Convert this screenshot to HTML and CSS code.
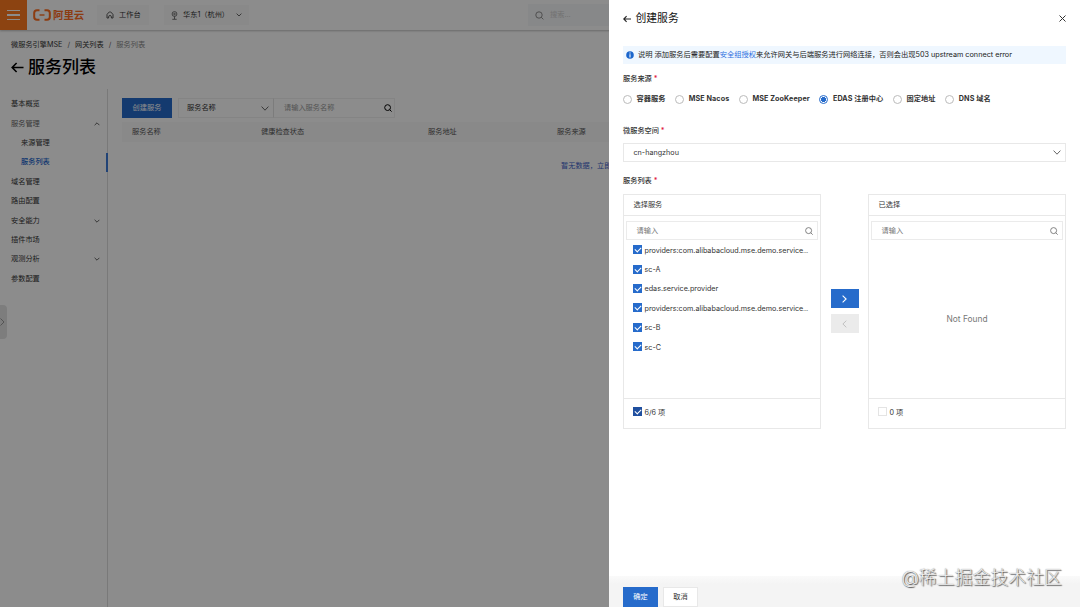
FILE: index.html
```html
<!DOCTYPE html>
<html lang="zh-CN">
<head>
    <meta charset="UTF-8">
    <meta name="viewport" content="width=device-width, initial-scale=1.0">
    <title>服务列表</title>
    <link rel="stylesheet" href="styles.css">
</head>
<body>

    <div class="page">
        <header class="topbar">
            <div class="menu-btn"><span></span><span></span><span></span></div>
            <div class="logo">
                <svg width="18" height="12" viewBox="0 0 18 12" fill="none" stroke="#ff6d1f" stroke-width="2">
                    <path d="M6.5 1.2H4Q1.2 1.2 1.2 4V8Q1.2 10.8 4 10.8H6.5M11.5 1.2H14Q16.8 1.2 16.8 4V8Q16.8 10.8 14 10.8H11.5"/>
                    <path d="M6.5 6H11.5" stroke-width="1.4"/>
                </svg>
                <span>阿里云</span>
            </div>
            <div class="top-item workbench">
                <svg width="8" height="8" viewBox="0 0 8 8" fill="none" stroke="#555"><path d="M1 7V3.6Q1 3 1.6 2.5L3.4 1.1Q4 .7 4.6 1.1L6.4 2.5Q7 3 7 3.6V7H5.4V5.6Q5.4 4.6 4 4.6T2.6 5.6V7Z"/></svg>
                工作台
            </div>
            <div class="top-item region">
                <svg width="7" height="9" viewBox="0 0 7 9" fill="none" stroke="#555" stroke-width=".8"><circle cx="3.5" cy="3" r="2.4"/><circle cx="3.5" cy="3" r=".8"/><path d="M3.5 5.4V8M1.3 8.3h4.4"/></svg>
                华东1（杭州）
                <svg class="chev" width="6" height="4" viewBox="0 0 6 4"><path d="M.6.6 3 3 5.4.6"/></svg>
            </div>
            <div class="top-search">
                <svg width="9" height="9" viewBox="0 0 9 9" fill="none" stroke="#777" stroke-width=".8"><circle cx="4" cy="4" r="3.2"/><path d="M6.3 6.3 8.4 8.4"/></svg>
                <span>搜索...</span>
            </div>
        </header>

        <div class="breadcrumb">微服务引擎MSE<i>/</i>网关列表<i>/</i><span>服务列表</span></div>
        <h1 class="page-title">
            <svg width="13" height="11" viewBox="0 0 13 11" fill="none" stroke="#000" stroke-width="1.6"><path d="M12.5 5.5H1.4M5.6 1 1.2 5.5 5.6 10"/></svg>
            服务列表
        </h1>

        <div class="main">
            <nav class="sidebar">
                <a>基本概览</a>
                <a class="open">服务管理<svg class="chev" width="6" height="4" viewBox="0 0 6 4"><path d="M.6 3.2 3 .8 5.4 3.2"/></svg></a>
                <a class="sub">来源管理</a>
                <a class="sub active">服务列表</a>
                <a>域名管理</a>
                <a>路由配置</a>
                <a>安全能力<svg class="chev" width="6" height="4" viewBox="0 0 6 4"><path d="M.6.8 3 3.2 5.4.8"/></svg></a>
                <a>插件市场</a>
                <a>观测分析<svg class="chev" width="6" height="4" viewBox="0 0 6 4"><path d="M.6.8 3 3.2 5.4.8"/></svg></a>
                <a>参数配置</a>
            </nav>
            <section class="content">
                <div class="toolbar">
                    <button class="btn primary create">创建服务</button>
                    <div class="filter">服务名称
                        <svg class="chev" width="8" height="5" viewBox="0 0 8 5"><path d="M.6.6 4 4.2 7.4.6"/></svg>
                    </div>
                    <div class="keyword">请输入服务名称
                        <svg width="8" height="8" viewBox="0 0 8 8" fill="none" stroke="#000"><circle cx="3.6" cy="3.6" r="2.9"/><path d="M5.7 5.7 7.6 7.6"/></svg>
                    </div>
                </div>
                <div class="thead">
                    <span>服务名称</span><span>健康检查状态</span><span>服务地址</span><span>服务来源</span>
                </div>
                <div class="empty">暂无数据，立即创建</div>
            </section>
        </div>
        <div class="collapse"><svg width="5" height="8" viewBox="0 0 5 8" fill="none" stroke="#999"><path d="M.5.5 4 4 .5 7.5"/></svg></div>
    </div>

    <div class="mask"></div>

    <aside class="drawer">
        <div class="drawer-head">
            <svg width="8" height="8" viewBox="0 0 8 8" fill="none" stroke="#222" stroke-width="1.1"><path d="M8 4H.8M3.6 1.2.8 4 3.6 6.8"/></svg>
            <span>创建服务</span>
            <svg class="close" width="7" height="7" viewBox="0 0 7 7" fill="none" stroke="#333"><path d="M.5.5 6.5 6.5M6.5.5.5 6.5"/></svg>
        </div>

        <div class="drawer-body">
            <div class="notice">
                <svg width="8" height="8" viewBox="0 0 8 8"><circle cx="4" cy="4" r="3.8" fill="#1c66cc"/><path d="M4 1.5v1.1M4 3.2v3.2" stroke="#fff" stroke-width="1.1"/></svg>
                <p>说明 添加服务后需要配置<a>安全组授权</a>来允许网关与后端服务进行网络连接，否则会出现503 upstream connect error</p>
            </div>

            <div class="label">服务来源 <em>*</em></div>
            <div class="radios">
                <label><i></i>容器服务</label>
                <label><i></i>MSE Nacos</label>
                <label><i></i>MSE ZooKeeper</label>
                <label><i class="on"></i>EDAS 注册中心</label>
                <label><i></i>固定地址</label>
                <label><i></i>DNS 域名</label>
            </div>

            <div class="label">微服务空间 <em>*</em></div>
            <div class="select">cn-hangzhou
                <svg class="chev" width="8" height="5" viewBox="0 0 8 5"><path d="M.6.6 4 4.2 7.4.6"/></svg>
            </div>

            <div class="label">服务列表 <em>*</em></div>
            <div class="transfer">
                <div class="panel">
                    <div class="panel-head">选择服务</div>
                    <div class="panel-search">请输入
                        <svg width="8" height="8" viewBox="0 0 8 8" fill="none" stroke="#666" stroke-width=".8"><circle cx="3.6" cy="3.6" r="3"/><path d="M5.8 5.8 7.7 7.7"/></svg>
                    </div>
                    <ul class="panel-list">
                        <li><b class="check"></b><span>providers:com.alibabacloud.mse.demo.service<small>...</small></span></li>
                        <li><b class="check"></b><span>sc-A</span></li>
                        <li><b class="check"></b><span>edas.service.provider</span></li>
                        <li><b class="check"></b><span>providers:com.alibabacloud.mse.demo.service<small>...</small></span></li>
                        <li><b class="check"></b><span>sc-B</span></li>
                        <li><b class="check"></b><span>sc-C</span></li>
                    </ul>
                    <div class="panel-foot"><b class="check dark"></b><span>6/6 项</span></div>
                </div>
                <div class="moves">
                    <button class="move primary"><svg width="5" height="8" viewBox="0 0 5 8" fill="none" stroke="#fff" stroke-width="1.1"><path d="M.6.7 4.1 4 .6 7.3"/></svg></button>
                    <button class="move"><svg width="5" height="8" viewBox="0 0 5 8" fill="none" stroke="#bbb" stroke-width=".9"><path d="M4.3.7.9 4l3.4 3.3"/></svg></button>
                </div>
                <div class="panel">
                    <div class="panel-head">已选择</div>
                    <div class="panel-search">请输入
                        <svg width="8" height="8" viewBox="0 0 8 8" fill="none" stroke="#666" stroke-width=".8"><circle cx="3.6" cy="3.6" r="3"/><path d="M5.8 5.8 7.7 7.7"/></svg>
                    </div>
                    <div class="not-found">Not Found</div>
                    <div class="panel-foot"><b class="check off"></b><span>0 项</span></div>
                </div>
            </div>
        </div>

        <div class="drawer-foot">
            <button class="btn primary">确定</button>
            <button class="btn">取消</button>
        </div>
    </aside>

    <div class="watermark">@稀土掘金技术社区</div>

</body>
</html>
```
FILE: styles.css
```css
* {
    box-sizing: border-box;
}
body {
    margin: 0;
    height: 607px;
    overflow: hidden;
    font-family: Inter, "Noto Sans CJK SC", sans-serif;
    font-size: 7.2px;
    line-height: 10px;
    color: #333;
}
svg {
    display: block;
    flex: none;
}
button {
    font: inherit;
    padding: 0;
    margin: 0;
}
.chev {
    fill: none;
    stroke: #555;
    stroke-width: .9;
}
.page {
    height: 607px;
    background: #fff;
}
.mask {
    position: absolute;
    inset: 0;
    background: rgba(0, 0, 0, .45);
}

/* top bar */
.topbar {
    display: flex;
    align-items: center;
    height: 30px;
    box-shadow: 0 1px 2px rgba(0, 0, 0, .25);
}
.menu-btn {
    width: 27px;
    height: 30px;
    background: #ff7a20;
    display: flex;
    flex-direction: column;
    justify-content: center;
    align-items: center;
    gap: 3px;
}
.menu-btn span {
    width: 13px;
    height: 1.5px;
    background: #fff;
}
.logo {
    display: flex;
    align-items: center;
    gap: 2px;
    width: 64px;
    margin-left: 6px;
    height: 12px;
    color: #ff6d1f;
    font-size: 10.4px;
    font-weight: 700;
}
.logo span {
    padding-top: 1px;
}
.top-item {
    display: flex;
    align-items: center;
    height: 20px;
    background: #fafafa;
}
.workbench {
    width: 52px;
    padding-left: 9px;
    gap: 5px;
}
.region {
    width: 85px;
    margin-left: 15px;
    padding-left: 7px;
    gap: 5px;
}
.region .chev {
    margin-left: 2px;
}
.top-search {
    display: flex;
    align-items: center;
    gap: 6px;
    height: 22px;
    width: 200px;
    margin-left: 279px;
    padding-left: 7px;
    background: #f6f7f9;
    color: #d0d0d0;
}

.breadcrumb {
    padding: 10px 0 0 11px;
}
.breadcrumb i {
    font-style: normal;
    margin: 0 5px;
    color: #666;
}
.breadcrumb span {
    color: #888;
}
.page-title {
    display: flex;
    align-items: center;
    gap: 4px;
    margin: 6px 0 0 11px;
    height: 22px;
    font-size: 17px;
    font-weight: 500;
    color: #000;
}

/* sidebar and table */
.main {
    display: flex;
    height: 519px;
    margin-top: 11px;
}
.sidebar {
    width: 108px;
    padding-top: 5.5px;
    border-right: 1px solid #ddd;
}
.sidebar a {
    display: flex;
    align-items: center;
    justify-content: space-between;
    height: 19.4px;
    padding: 0 7px 0 11px;
}
.sidebar a.open {
    color: #666;
}
.sidebar a.sub {
    padding-left: 21px;
}
.sidebar a.active {
    color: #1c66cc;
    font-weight: 500;
    border-right: 2px solid #3c7ad8;
    margin-right: -1px;
}
.content {
    flex: 1;
    padding: 9px 0 0 14px;
}
.toolbar {
    display: flex;
    height: 20px;
}
.btn {
    height: 20px;
    width: 35px;
    border: 1px solid #e8e8e8;
    background: #fff;
    color: #333;
}
.btn.primary {
    background: #266bcb;
    border-color: #266bcb;
    color: #fff;
}
.btn.create {
    width: 50px;
    margin-right: 6px;
}
.filter, .keyword {
    display: flex;
    align-items: center;
    justify-content: space-between;
    border: 1px solid #f0f0f0;
}
.filter {
    width: 96px;
    padding: 0 4px 0 8px;
    border-right-color: #e2e2e2;
}
.keyword {
    width: 121px;
    padding: 0 2px 0 10px;
    border-left: 0;
    color: #999;
}
.thead {
    display: flex;
    align-items: center;
    height: 20px;
    margin-top: 4px;
    background: #fafafa;
    color: #555;
}
.thead span {
    width: 129px;
    padding-left: 10px;
}
.thead span:nth-child(2) {
    width: 167px;
}
.empty {
    padding: 19px 0 0 439px;
    color: #3c5fc8;
}
.collapse {
    position: absolute;
    left: 0;
    top: 305px;
    width: 7px;
    height: 34px;
    background: #e4e4e4;
    border-radius: 0 4px 4px 0;
    display: flex;
    align-items: center;
}

/* drawer */
.drawer {
    position: absolute;
    top: 0;
    right: 0;
    width: 471px;
    height: 607px;
    background: #fff;
    display: flex;
    flex-direction: column;
}
.drawer-head {
    display: flex;
    align-items: center;
    height: 37px;
    padding: 0 14px;
    font-size: 10.8px;
    color: #111;
    gap: 4.5px;
}
.drawer-head .close {
    margin-left: auto;
}
.drawer-body {
    flex: 1;
    padding: 9px 14px 0;
}
.notice {
    display: flex;
    align-items: center;
    gap: 4px;
    height: 18px;
    padding: 0 0 0 3px;
    background: #eff7ff;
    color: #222;
}
.notice p {
    margin: 0;
    font-size: 7.25px;
    white-space: nowrap;
}
.notice a {
    color: #2f72e0;
}
.label {
    margin-top: 10px;
    font-weight: 500;
    height: 10px;
}
.label em {
    color: #e02040;
    font-style: normal;
}
.radios {
    display: flex;
    height: 10px;
    margin: 10px 0 22px;
    gap: 9.7px;
    font-weight: 700;
    color: #333;
    letter-spacing: .08px;
}
.radios label {
    display: flex;
    align-items: center;
    white-space: nowrap;
}
.radios i {
    width: 9px;
    height: 9px;
    border: 1px solid #bbb;
    border-radius: 50%;
    margin-right: 4.5px;
    flex: none;
}
.radios i.on {
    border-color: #266bcb;
    background: radial-gradient(circle, #266bcb 2.3px, #fff 2.8px);
}
.select {
    display: flex;
    align-items: center;
    justify-content: space-between;
    height: 19px;
    margin: 7px 0 14px;
    padding: 0 4px 0 9.5px;
    border: 1px solid #e8e8e8;
}
.transfer {
    display: flex;
    margin-top: 8px;
    height: 235px;
}
.panel {
    width: 198px;
    border: 1px solid #e8e8e8;
    display: flex;
    flex-direction: column;
}
.panel-head {
    height: 21px;
    padding: 5px 9.5px;
    border-bottom: 1px solid #e8e8e8;
}
.panel-search {
    display: flex;
    align-items: center;
    justify-content: space-between;
    height: 19px;
    margin: 5px 2px 0;
    padding: 0 4px 0 9.5px;
    border: 1px solid #ebebeb;
    color: #777;
}
.panel-list {
    list-style: none;
    margin: 0;
    padding: 0 0 0 9px;
    flex: 1;
}
.panel-list li {
    display: flex;
    align-items: center;
    height: 19.4px;
    white-space: nowrap;
}
.panel-list span, .panel-foot span {
    padding-top: 2px;
}
.panel-list small {
    font-size: 5.5px;
}
.check {
    width: 9px;
    height: 9px;
    margin-right: 2.5px;
    background: #266bcb;
    flex: none;
}
.check::after {
    content: "";
    display: block;
    width: 5px;
    height: 3px;
    margin: 2px 0 0 2px;
    border: solid #fff;
    border-width: 0 0 1px 1px;
    transform: rotate(-45deg);
}
.check.dark {
    background: #1f4f9f;
}
.check.off {
    background: #fff;
    border: 1px solid #e4e4e4;
}
.check.off::after {
    display: none;
}
.panel-foot {
    display: flex;
    align-items: center;
    height: 30px;
    padding: 0 9px 4px;
    border-top: 1px solid #e8e8e8;
}
.not-found {
    flex: 1;
    display: flex;
    align-items: center;
    justify-content: center;
    font-size: 8.4px;
    color: #777;
}
.moves {
    width: 47px;
    padding: 95px 9px 0 10px;
}
.move {
    display: flex;
    align-items: center;
    justify-content: center;
    width: 28px;
    height: 19px;
    margin-bottom: 6px;
    padding-right: 1px;
    border: 0;
    background: #ebebeb;
}
.move.primary {
    background: #266bcb;
}
.drawer-foot {
    display: flex;
    gap: 5px;
    height: 31px;
    padding: 11px 14px 0;
    background: linear-gradient(#fafafa, #f4f4f4 8px);
}
.watermark {
    position: absolute;
    right: 18px;
    top: 566px;
    font-size: 17.9px;
    line-height: 24px;
    font-weight: 300;
    color: #eee;
    text-shadow: 1px 1px 1px #555, 0 0 1px #777;
}
```
